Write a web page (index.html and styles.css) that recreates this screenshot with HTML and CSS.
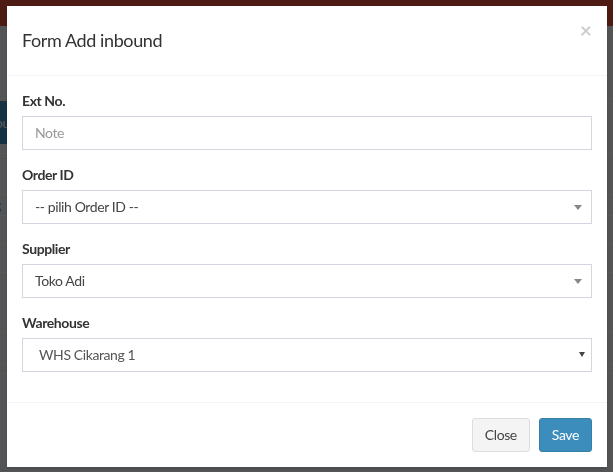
FILE: index.html
```html
<!DOCTYPE html>
<html lang="id">
<head>
<meta charset="utf-8">
<title>Form Add inbound</title>
<link rel="stylesheet" href="styles.css">
</head>
<body>
<div class="page">
  <header class="topbar"></header>
  <div class="content">
    <div class="content-head"></div>
    <div class="list">
      <div class="row row-55"><span class="btn-blue">Add inbound</span></div>
      <div class="row row-41"></div>
      <div class="row row-21"><span class="cell-text">Cikarang</span></div>
      <div class="row row-28"></div>
      <div class="row row-29"></div>
      <div class="row row-60"></div>
      <div class="row row-31"></div>
      <div class="row row-10"></div>
      <div class="row row-42"></div>
    </div>
  </div>
</div>

<div class="backdrop"></div>

<div class="modal">
  <div class="modal-dialog">
    <div class="modal-content">
      <div class="modal-header">
        <h4 class="modal-title">Form Add inbound</h4>
        <button type="button" class="close">&times;</button>
      </div>
      <div class="modal-body">
        <div class="form-group">
          <label>Ext No.</label>
          <input type="text" class="form-control" placeholder="Note">
        </div>
        <div class="form-group">
          <label>Order ID</label>
          <div class="select2"><span class="select2-text">-- pilih Order ID --</span><b class="select2-arrow"></b></div>
        </div>
        <div class="form-group">
          <label>Supplier</label>
          <div class="select2"><span class="select2-text">Toko Adi</span><b class="select2-arrow"></b></div>
        </div>
        <div class="form-group">
          <label>Warehouse</label>
          <div class="select-native">
            <select class="form-control native">
              <option>WHS Cikarang 1</option>
            </select>
          </div>
        </div>
      </div>
      <div class="modal-footer">
        <button type="button" class="btn btn-default">Close</button>
        <button type="button" class="btn btn-primary">Save</button>
      </div>
    </div>
  </div>
</div>
</body>
</html>
```

FILE: styles.css
```css
* { box-sizing: border-box; }

html, body {
  margin: 0;
  height: 100%;
}

body {
  font-family: Lato, "Open Sans", sans-serif;
  font-size: 14px;
  line-height: 1.42857;
  letter-spacing: -0.4px;
  color: #333;
  background: #ecf0f5;
  overflow: hidden;
}

/* page under the modal */
.topbar {
  height: 26px;
  background: #dd4b39;
}

.content-head {
  height: 72px;
}

.list {
  background: #ecf0f5;
}

.row {
  border-top: 1px solid #ffffff;
  display: flex;
  align-items: center;
}

.row-55 { height: 55px; align-items: flex-start; }
.row-41 { height: 41px; }
.row-21 { height: 21px; }
.row-28 { height: 28px; }
.row-29 { height: 29px; }
.row-60 { height: 60px; }
.row-31 { height: 31px; }
.row-10 { height: 10px; }
.row-42 { height: 42px; }

.btn-blue {
  margin-top: 2px;
  margin-left: -60px;
  height: 43px;
  line-height: 43px;
  padding: 0 10px;
  background: #3c8dbc;
  color: #fff;
  font-size: 14px;
}

.cell-text {
  margin-left: -50px;
  color: #666;
  font-size: 14px;
}

.backdrop {
  position: fixed;
  inset: 0;
  background: rgba(0, 0, 0, 0.65);
}

/* modal */
.modal {
  position: fixed;
  inset: 0;
}

.modal-dialog {
  width: 600px;
  margin: 6px 6px 0 7px;
}

.modal-content {
  background: #fff;
  box-shadow: 0 2px 3px rgba(0, 0, 0, 0.125);
}

.modal-header {
  padding: 15px;
  border-bottom: 1px solid #f4f4f4;
  display: flex;
  justify-content: space-between;
  align-items: flex-start;
}

.modal-title {
  margin: 0;
  font-size: 18px;
  font-weight: 400;
  line-height: 39px;
  color: #333;
}

.close {
  margin-top: -2px;
  padding: 0;
  border: 0;
  background: none;
  font-family: inherit;
  font-size: 21px;
  font-weight: 700;
  line-height: 1;
  color: #000;
  opacity: 0.2;
}

.modal-body {
  padding: 15px;
}

.form-group {
  margin-bottom: 15px;
}

.form-group label {
  display: block;
  margin-bottom: 5px;
  font-weight: 700;
  color: #333;
}

.form-control {
  display: block;
  width: 100%;
  height: 34px;
  padding: 6px 12px;
  font-family: inherit;
  font-size: 14px;
  line-height: 1.42857;
  letter-spacing: inherit;
  color: #555;
  background: #fff;
  border: 1px solid #d2d6de;
  border-radius: 0;
  outline: none;
}

.form-control::placeholder {
  color: #999;
}

.select2 {
  position: relative;
  height: 34px;
  padding: 6px 12px;
  border: 1px solid #d2d6de;
  color: #444;
  line-height: 20px;
}

.select2-arrow {
  position: absolute;
  top: 50%;
  right: 9px;
  margin-top: -2px;
  width: 0;
  height: 0;
  border-style: solid;
  border-width: 5px 4px 0 4px;
  border-color: #888 transparent transparent transparent;
}

.select-native {
  position: relative;
}

.native {
  appearance: none;
  -webkit-appearance: none;
  padding-left: 16px;
}

.select-native::after {
  content: "";
  position: absolute;
  top: 14px;
  right: 7px;
  width: 0;
  height: 0;
  border-style: solid;
  border-width: 5px 3px 0 3px;
  border-color: #444 transparent transparent transparent;
}

.modal-footer {
  padding: 15px;
  border-top: 1px solid #f4f4f4;
  display: flex;
  justify-content: flex-end;
  gap: 9px;
}

.btn {
  font-family: inherit;
  font-size: 14px;
  line-height: 1.42857;
  letter-spacing: inherit;
  padding: 6px 12px;
  border: 1px solid transparent;
  border-radius: 3px;
}

.btn-default {
  background: #f4f4f4;
  color: #444;
  border-color: #ddd;
}

.btn-primary {
  background: #3c8dbc;
  color: #fff;
  border-color: #367fa9;
}
```
